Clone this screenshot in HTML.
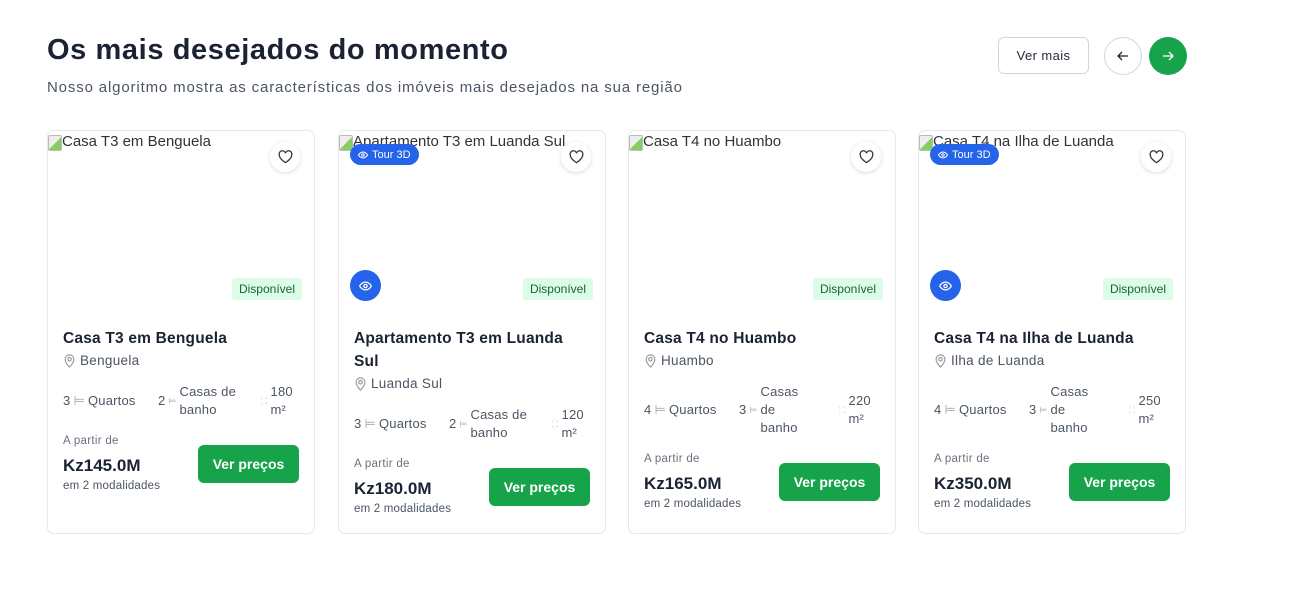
<!DOCTYPE html>
<html><head><meta charset="utf-8"><style>
*{box-sizing:border-box;margin:0;padding:0}
body{width:1302px;height:591px;background:#fff;font-family:"Liberation Sans",sans-serif;color:#1f2937;position:relative;overflow:hidden}
h1{position:absolute;left:47px;top:34px;font-size:29px;font-weight:bold;color:#1a2233;letter-spacing:0.6px}
.sub{position:absolute;left:47px;top:79px;font-size:15px;color:#4b5563;letter-spacing:0.85px}
.vm{position:absolute;left:998px;top:37px;width:91px;height:37px;border:1px solid #d1d5db;border-radius:6px;font-size:13px;display:flex;align-items:center;justify-content:center;color:#1f2937;letter-spacing:0.4px}
.circ{position:absolute;top:37px;width:38px;height:38px;border-radius:50%;display:flex;align-items:center;justify-content:center}
.card{position:absolute;top:130px;width:268px;height:404px;border:1px solid #e5e7eb;border-radius:7px;overflow:hidden}
.alt{position:absolute;left:0;top:2px;font-size:15px;color:#333;white-space:nowrap;padding-left:14px}
.alt:before{content:"";position:absolute;left:0;top:2px;width:12px;height:14px;border:1px solid #bbb;border-radius:2px;background:linear-gradient(135deg,#eee 50%,#8c6 50%)}
.heart{position:absolute;right:14px;top:11px;width:30px;height:30px;border-radius:50%;background:#fff;box-shadow:0 1px 4px rgba(0,0,0,.15);display:flex;align-items:center;justify-content:center}
.tour{position:absolute;left:11px;top:13px;height:21px;padding:0 8px;background:#2563eb;color:#fff;font-size:11px;border-radius:11px;display:flex;align-items:center;gap:4px}
.eye{position:absolute;left:11px;top:139px;width:31px;height:31px;border-radius:50%;background:#2563eb;display:flex;align-items:center;justify-content:center}
.disp{position:absolute;right:12px;top:147px;height:22px;padding:0 7px;background:#dcfce7;color:#166534;font-size:12px;border-radius:3px;display:flex;align-items:center}
.body{position:absolute;left:15px;right:15px;top:196px}
.t{font-size:15.5px;font-weight:bold;color:#1a2233;line-height:23px;letter-spacing:0.2px}
.loc{font-size:13.5px;color:#4b5563;margin-top:3px;display:flex;align-items:center;gap:4px;letter-spacing:0.3px}
.feat{display:flex;align-items:center;margin-top:15px;font-size:13px;color:#4b5563;line-height:18px;letter-spacing:0.2px}
.feat .i{display:flex;align-items:center;gap:3px}
.bot{display:flex;justify-content:space-between;align-items:center;margin-top:16px}
.ap{font-size:11.5px;color:#6b7280;letter-spacing:0.3px}
.pr{font-size:17px;font-weight:bold;color:#1a2233;margin-top:9px}
.md{font-size:11.5px;color:#4b5563;margin-top:4px;letter-spacing:0.2px}
.btn{width:101px;height:38px;background:#16a34a;color:#fff;border-radius:6px;font-size:14px;font-weight:bold;display:flex;align-items:center;justify-content:center}
</style></head><body>
<h1>Os mais desejados do momento</h1>
<div class="sub">Nosso algoritmo mostra as características dos imóveis mais desejados na sua região</div>
<div class="vm">Ver mais</div>
<div class="circ" style="left:1104px;border:1px solid #d1d5db"><svg width="14" height="14" viewBox="0 0 14 14" fill="none" stroke="#222" stroke-width="1.3"><path d="M12 7H2M6 3L2 7l4 4"/></svg></div>
<div class="circ" style="left:1149px;background:#16a34a"><svg width="14" height="14" viewBox="0 0 14 14" fill="none" stroke="#fff" stroke-width="1.3"><path d="M2 7h10M8 3l4 4-4 4"/></svg></div>

<div class="card" style="left:47px">
<div class="alt">Casa T3 em Benguela</div>
<div class="heart"><svg width="15" height="14" viewBox="0 0 24 22" fill="none" stroke="#333" stroke-width="2"><path d="M12 20S2 14 2 7.5A5 5 0 0 1 12 5a5 5 0 0 1 10 2.5C22 14 12 20 12 20z"/></svg></div>
<div class="disp">Disponível</div>
<div class="body">
<div class="t">Casa T3 em Benguela</div>
<div class="loc"><svg width="13" height="14" viewBox="0 0 14 16" fill="none" stroke="#999" stroke-width="1.3"><path d="M7 15s5-5 5-9A5 5 0 0 0 2 6c0 4 5 9 5 9z"/><circle cx="7" cy="6" r="2"/></svg>Benguela</div>
<div class="feat"><div class="i" style="width:95px">3 <span style="color:#aaa">⊨</span> Quartos</div><div class="i" style="width:103px">2 <span style="color:#aaa;font-size:9px">⊨</span> <span>Casas de<br>banho</span></div><div class="i"><span style="color:#ccc;font-size:9px">⛶</span> <span>180<br>m²</span></div></div>
<div class="bot"><div><div class="ap">A partir de</div><div class="pr">Kz145.0M</div><div class="md">em 2 modalidades</div></div><div class="btn">Ver preços</div></div>
</div></div>

<div class="card" style="left:338px">
<div class="alt">Apartamento T3 em Luanda Sul</div>
<div class="tour"><svg width="10" height="8" viewBox="0 0 20 14" fill="none" stroke="#fff" stroke-width="2"><path d="M1 7s3-6 9-6 9 6 9 6-3 6-9 6-9-6-9-6z"/><circle cx="10" cy="7" r="2.5"/></svg>Tour 3D</div>
<div class="heart"><svg width="15" height="14" viewBox="0 0 24 22" fill="none" stroke="#333" stroke-width="2"><path d="M12 20S2 14 2 7.5A5 5 0 0 1 12 5a5 5 0 0 1 10 2.5C22 14 12 20 12 20z"/></svg></div>
<div class="eye"><svg width="13" height="10" viewBox="0 0 20 14" fill="none" stroke="#fff" stroke-width="2"><path d="M1 7s3-6 9-6 9 6 9 6-3 6-9 6-9-6-9-6z"/><circle cx="10" cy="7" r="2.5"/></svg></div>
<div class="disp">Disponível</div>
<div class="body">
<div class="t">Apartamento T3 em Luanda<br>Sul</div>
<div class="loc"><svg width="13" height="14" viewBox="0 0 14 16" fill="none" stroke="#999" stroke-width="1.3"><path d="M7 15s5-5 5-9A5 5 0 0 0 2 6c0 4 5 9 5 9z"/><circle cx="7" cy="6" r="2"/></svg>Luanda Sul</div>
<div class="feat"><div class="i" style="width:95px">3 <span style="color:#aaa">⊨</span> Quartos</div><div class="i" style="width:103px">2 <span style="color:#aaa;font-size:9px">⊨</span> <span>Casas de<br>banho</span></div><div class="i"><span style="color:#ccc;font-size:9px">⛶</span> <span>120<br>m²</span></div></div>
<div class="bot"><div><div class="ap">A partir de</div><div class="pr">Kz180.0M</div><div class="md">em 2 modalidades</div></div><div class="btn">Ver preços</div></div>
</div></div>

<div class="card" style="left:628px">
<div class="alt">Casa T4 no Huambo</div>
<div class="heart"><svg width="15" height="14" viewBox="0 0 24 22" fill="none" stroke="#333" stroke-width="2"><path d="M12 20S2 14 2 7.5A5 5 0 0 1 12 5a5 5 0 0 1 10 2.5C22 14 12 20 12 20z"/></svg></div>
<div class="disp">Disponível</div>
<div class="body">
<div class="t">Casa T4 no Huambo</div>
<div class="loc"><svg width="13" height="14" viewBox="0 0 14 16" fill="none" stroke="#999" stroke-width="1.3"><path d="M7 15s5-5 5-9A5 5 0 0 0 2 6c0 4 5 9 5 9z"/><circle cx="7" cy="6" r="2"/></svg>Huambo</div>
<div class="feat"><div class="i" style="width:95px">4 <span style="color:#aaa">⊨</span> Quartos</div><div class="i" style="width:100px">3 <span style="color:#aaa;font-size:9px">⊨</span> <span>Casas<br>de<br>banho</span></div><div class="i"><span style="color:#ccc;font-size:9px">⛶</span> <span>220<br>m²</span></div></div>
<div class="bot"><div><div class="ap">A partir de</div><div class="pr">Kz165.0M</div><div class="md">em 2 modalidades</div></div><div class="btn">Ver preços</div></div>
</div></div>

<div class="card" style="left:918px">
<div class="alt">Casa T4 na Ilha de Luanda</div>
<div class="tour"><svg width="10" height="8" viewBox="0 0 20 14" fill="none" stroke="#fff" stroke-width="2"><path d="M1 7s3-6 9-6 9 6 9 6-3 6-9 6-9-6-9-6z"/><circle cx="10" cy="7" r="2.5"/></svg>Tour 3D</div>
<div class="heart"><svg width="15" height="14" viewBox="0 0 24 22" fill="none" stroke="#333" stroke-width="2"><path d="M12 20S2 14 2 7.5A5 5 0 0 1 12 5a5 5 0 0 1 10 2.5C22 14 12 20 12 20z"/></svg></div>
<div class="eye"><svg width="13" height="10" viewBox="0 0 20 14" fill="none" stroke="#fff" stroke-width="2"><path d="M1 7s3-6 9-6 9 6 9 6-3 6-9 6-9-6-9-6z"/><circle cx="10" cy="7" r="2.5"/></svg></div>
<div class="disp">Disponível</div>
<div class="body">
<div class="t">Casa T4 na Ilha de Luanda</div>
<div class="loc"><svg width="13" height="14" viewBox="0 0 14 16" fill="none" stroke="#999" stroke-width="1.3"><path d="M7 15s5-5 5-9A5 5 0 0 0 2 6c0 4 5 9 5 9z"/><circle cx="7" cy="6" r="2"/></svg>Ilha de Luanda</div>
<div class="feat"><div class="i" style="width:95px">4 <span style="color:#aaa">⊨</span> Quartos</div><div class="i" style="width:100px">3 <span style="color:#aaa;font-size:9px">⊨</span> <span>Casas<br>de<br>banho</span></div><div class="i"><span style="color:#ccc;font-size:9px">⛶</span> <span>250<br>m²</span></div></div>
<div class="bot"><div><div class="ap">A partir de</div><div class="pr">Kz350.0M</div><div class="md">em 2 modalidades</div></div><div class="btn">Ver preços</div></div>
</div></div>
</body></html>
